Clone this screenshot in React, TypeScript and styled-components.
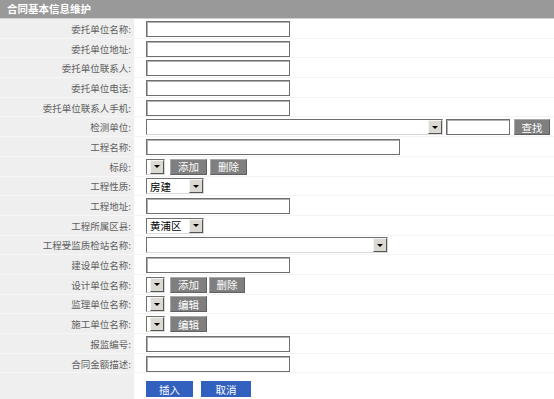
import * as React from "react";
import styled, { createGlobalStyle } from "styled-components";

const GlobalStyle = createGlobalStyle`
  html, body {
    margin: 0;
    padding: 0;
    background: #ffffff;
  }
  body {
    font-family: "Noto Sans CJK SC", "Liberation Sans", sans-serif;
  }
`;

const Page = styled.div`
  width: 554px;
  height: 399px;
  overflow: hidden;
  background: #fff;
`;

const Header = styled.div`
  height: 18px;
  border-bottom: 1px solid #d0d0d0;
  background: #999999;
  color: #fff;
  font-weight: bold;
  font-size: 10.5px;
  line-height: 17px;
  padding-left: 7px;
`;

const Form = styled.div`
  display: grid;
  grid-template-columns: 134px 1fr;
  grid-auto-rows: 19.7px;
`;

const Label = styled.div`
  background: #efefef;
  border-bottom: 1px solid #f6f6f6;
  color: #5e5e5e;
  font-size: 9.5px;
  text-align: right;
  padding-right: 3px;
  padding-top: 1px;
  display: flex;
  align-items: center;
  justify-content: flex-end;
  white-space: nowrap;
`;

const Field = styled.div`
  border-bottom: 1px solid #f3f3f3;
  padding-left: 12px;
  padding-top: 1px;
  display: flex;
  align-items: center;
  gap: 3px;
`;

const ActionLabel = styled(Label)`
  height: 26px;
  border-bottom: none;
`;

const ActionField = styled(Field)`
  height: 26px;
  border-bottom: none;
  gap: 8px;
  padding-top: 8px;
  align-items: flex-start;
`;

const TextBox = styled.div<{ $w: number }>`
  box-sizing: border-box;
  width: ${(p) => p.$w}px;
  height: 16px;
  border: 1px solid #6f6f6f;
  box-shadow: inset 1px 1px 0 #b0b0b0;
  background: #fff;
`;

const SelectBox = styled.div<{ $w: number }>`
  box-sizing: border-box;
  width: ${(p) => p.$w}px;
  height: 16px;
  border: 1px solid;
  border-color: #6f6f6f #d8d8d8 #d8d8d8 #6f6f6f;
  background: #fff;
  display: flex;
  align-items: center;
  font-size: 10.5px;
  color: #000;
`;

const SelectText = styled.span`
  flex: 1;
  padding-left: 3px;
  overflow: hidden;
  white-space: nowrap;
`;

const Arrow = styled.span`
  box-sizing: border-box;
  width: 14px;
  height: 14px;
  background: #dcd9d2;
  border: 1px solid;
  border-color: #f4f4f4 #555 #555 #f4f4f4;
  display: flex;
  align-items: center;
  justify-content: center;
  &::after {
    content: "";
    border-left: 3px solid transparent;
    border-right: 3px solid transparent;
    border-top: 3px solid #000;
  }
`;

const GreyButton = styled.div<{ $w: number; $ml?: number }>`
  box-sizing: border-box;
  width: ${(p) => p.$w}px;
  height: 16px;
  margin-left: ${(p) => p.$ml ?? 0}px;
  background: #7f7f7f;
  border: 1px solid;
  border-color: #a8a8a8 #5f5f5f #5f5f5f #a8a8a8;
  color: #fff;
  font-size: 10.5px;
  display: flex;
  align-items: center;
  justify-content: center;
`;

const BlueButton = styled.div<{ $w: number }>`
  box-sizing: border-box;
  width: ${(p) => p.$w}px;
  height: 16px;
  background: #3160bf;
  color: #fff;
  font-size: 10.5px;
  display: flex;
  align-items: center;
  justify-content: center;
`;

const Select: React.FC<{ w: number; value?: string }> = ({ w, value }) => (
  <SelectBox $w={w}>
    <SelectText>{value}</SelectText>
    <Arrow />
  </SelectBox>
);

type Row = { label: string; field: React.ReactNode };

const rows: Row[] = [
  { label: "委托单位名称:", field: <TextBox $w={144} /> },
  { label: "委托单位地址:", field: <TextBox $w={144} /> },
  { label: "委托单位联系人:", field: <TextBox $w={144} /> },
  { label: "委托单位电话:", field: <TextBox $w={144} /> },
  { label: "委托单位联系人手机:", field: <TextBox $w={144} /> },
  {
    label: "检测单位:",
    field: (
      <>
        <Select w={297} />
        <TextBox $w={64} />
        <GreyButton $w={36} $ml={1}>查找</GreyButton>
      </>
    ),
  },
  { label: "工程名称:", field: <TextBox $w={254} /> },
  {
    label: "标段:",
    field: (
      <>
        <Select w={19} />
        <GreyButton $w={37} $ml={2}>添加</GreyButton>
        <GreyButton $w={37}>删除</GreyButton>
      </>
    ),
  },
  { label: "工程性质:", field: <Select w={58} value="房建" /> },
  { label: "工程地址:", field: <TextBox $w={144} /> },
  { label: "工程所属区县:", field: <Select w={58} value="黄浦区" /> },
  { label: "工程受监质检站名称:", field: <Select w={242} /> },
  { label: "建设单位名称:", field: <TextBox $w={144} /> },
  {
    label: "设计单位名称:",
    field: (
      <>
        <Select w={19} />
        <GreyButton $w={37} $ml={2}>添加</GreyButton>
        <GreyButton $w={36} $ml={-1}>删除</GreyButton>
      </>
    ),
  },
  {
    label: "监理单位名称:",
    field: (
      <>
        <Select w={19} />
        <GreyButton $w={37} $ml={2}>编辑</GreyButton>
      </>
    ),
  },
  {
    label: "施工单位名称:",
    field: (
      <>
        <Select w={19} />
        <GreyButton $w={37} $ml={2}>编辑</GreyButton>
      </>
    ),
  },
  { label: "报监编号:", field: <TextBox $w={144} /> },
  { label: "合同金额描述:", field: <TextBox $w={144} /> },
];

const App: React.FC = () => {
  return (
    <Page>
      <GlobalStyle />
      <Header>合同基本信息维护</Header>
      <Form>
        {rows.map((r) => (
          <React.Fragment key={r.label}>
            <Label>{r.label}</Label>
            <Field>{r.field}</Field>
          </React.Fragment>
        ))}
        <ActionLabel />
        <ActionField>
          <BlueButton $w={47}>插入</BlueButton>
          <BlueButton $w={50}>取消</BlueButton>
        </ActionField>
      </Form>
    </Page>
  );
};

export default App;
